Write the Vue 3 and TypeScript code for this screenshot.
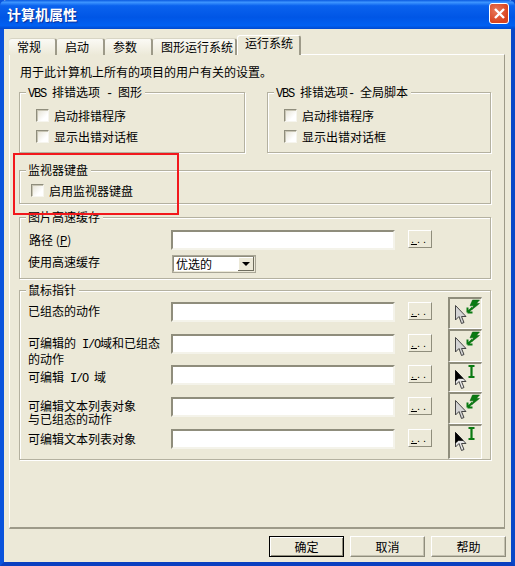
<script setup lang="ts">
interface PointerRow {
  id: number
  lines: string[]
}

const tabs = [
  { id: 1, text: '常规', width: 48 },
  { id: 2, text: '启动', width: 48 },
  { id: 3, text: '参数', width: 48 },
  { id: 4, text: '图形运行系统', width: 84 }
]

const pointerRows: PointerRow[] = [
  { id: 1, lines: ['已组态的动作'] },
  { id: 2, lines: ['可编辑的 I/O域和已组态', '的动作'] },
  { id: 3, lines: ['可编辑 I/O 域'] },
  { id: 4, lines: ['可编辑文本列表对象', '与已组态的动作'] },
  { id: 5, lines: ['可编辑文本列表对象'] }
]

const pointerIcons = [
  { id: 1, kind: 'bolt', height: 32 },
  { id: 2, kind: 'bolt', height: 33 },
  { id: 3, kind: 'beam', height: 31 },
  { id: 4, kind: 'bolt', height: 32 },
  { id: 5, kind: 'beam', height: 35 }
]

// latin runs are half width in the original font, so they get their own span
function parts(text: string) {
  return text.split(/([\x20-\x7e]+)/).filter(Boolean).map((t) => ({ t, latin: /^[\x20-\x7e]/.test(t) }))
}
</script>

<template>
  <div class="dialog">
    <div class="title-bar">
      <span class="title">计算机属性</span>
      <span class="close">
        <svg width="15" height="15" viewBox="0 0 15 15">
          <path d="M3 3 L12 12 M12 3 L3 12" stroke="#fff" stroke-width="2.4" fill="none" />
        </svg>
      </span>
    </div>

    <div class="body">
      <div class="tab-strip">
        <div v-for="t in tabs" :key="t.id" class="tab" :style="{ width: t.width + 'px' }">{{ t.text }}</div>
        <div class="tab active">运行系统</div>
      </div>

      <div class="panel">
        <p class="intro">用于此计算机上所有的项目的用户有关的设置。</p>

        <div class="vbs-row">
          <div class="group vbs-left">
            <span class="legend"><span v-for="p in parts('VBS 排错选项 - 图形')" :key="p.t" :class="{ mono: p.latin }">{{ p.t }}</span></span>
            <label class="check"><i class="box"></i>启动排错程序</label>
            <label class="check"><i class="box"></i>显示出错对话框</label>
          </div>
          <div class="group vbs-right">
            <span class="legend"><span v-for="p in parts('VBS 排错选项- 全局脚本')" :key="p.t" :class="{ mono: p.latin }">{{ p.t }}</span></span>
            <label class="check"><i class="box"></i>启动排错程序</label>
            <label class="check"><i class="box"></i>显示出错对话框</label>
          </div>
        </div>

        <div class="group monitor">
          <span class="legend">监视器键盘</span>
          <label class="check"><i class="box"></i>启用监视器键盘</label>
        </div>

        <div class="group cache">
          <span class="legend">图片高速缓存</span>
          <div class="row path-row">
            <span class="label">路径 (<u>P</u>)</span>
            <div class="input"></div>
            <button class="dots"><u>.</u>..</button>
          </div>
          <div class="row">
            <span class="label use-label">使用高速缓存</span>
            <div class="combo">
              <span class="combo-text">优选的</span>
              <span class="combo-btn"><i></i></span>
            </div>
          </div>
        </div>

        <div class="group pointer">
          <span class="legend">鼠标指针</span>
          <div class="pointer-list">
            <div v-for="r in pointerRows" :key="r.id" class="row pointer-row">
              <span class="label">
                <span v-for="l in r.lines" :key="l" class="line"><span v-for="p in parts(l)" :key="p.t" :class="{ mono: p.latin }">{{ p.t }}</span></span>
              </span>
              <div class="input"></div>
              <button class="dots"><u>.</u>..</button>
            </div>
          </div>
          <div class="icon-stack">
            <div v-for="ic in pointerIcons" :key="ic.id" class="icon-cell" :style="{ height: ic.height + 'px' }">
              <svg width="32" height="28" viewBox="0 0 32 28">
                <template v-if="ic.kind === 'bolt'">
                  <path d="M5.5 6.5 V21 L9 17.5 L11.5 24.5 L14 23.5 L11.5 17.5 H16 Z" fill="#d4d4d4" stroke="#444" stroke-width="1" />
                  <path d="M22.5 1 H29.5 L26.5 4.5 H29.5 L21.5 11 L23.5 6.8 H20 Z" fill="#0a7a12" stroke="#07600e" stroke-width="0.5" />
                  <path d="M17.5 13.5 L22.5 8.5 M17.5 13.5 V8.5 M17.5 13.5 H22.5" stroke="#0a7a12" stroke-width="2" fill="none" />
                </template>
                <template v-else>
                  <path d="M5.5 6.5 V21 L9 17.5 L11.5 24.5 L14 23.5 L11.5 17.5 H16 Z" fill="#e8e8e8" stroke="#444" stroke-width="1" />
                  <path d="M5.5 6.5 V17 L8.5 14.5 H13 Z" fill="#000" stroke="#000" stroke-width="0.6" />
                  <path d="M18.5 2 H24.5 M18.5 13 H24.5 M21.5 2 V13" stroke="#0a7a12" stroke-width="2.2" fill="none" />
                </template>
              </svg>
            </div>
          </div>
        </div>
      </div>

      <div class="actions">
        <button class="btn default">确定</button>
        <button class="btn">取消</button>
        <button class="btn">帮助</button>
      </div>
    </div>

    <div class="highlight"></div>
  </div>
</template>

<style>
html,
body {
  margin: 0;
  background: #ece9d8;
}
</style>

<style scoped>
.dialog {
  position: relative;
  width: 515px;
  height: 566px;
  box-sizing: border-box;
  display: flex;
  flex-direction: column;
  background: #ece9d8;
  border-left: 4px solid #0a53dc;
  border-right: 4px solid #0a47c8;
  border-bottom: 4px solid #0a3fc0;
  font-family: "Noto Sans CJK SC", "Liberation Sans", sans-serif;
  font-size: 12px;
  color: #000;
}

.title-bar {
  height: 29px;
  margin: 0 -4px;
  padding: 0 6px 2px 7px;
  box-sizing: border-box;
  display: flex;
  align-items: center;
  justify-content: space-between;
  background: linear-gradient(180deg, #0a5ae0 0%, #3d95ff 8%, #0a62ee 20%, #0056e6 60%, #0060f2 88%, #0049cf 100%);
  border-radius: 6px 6px 0 0;
}

.title {
  color: #fff;
  font-size: 14px;
  font-weight: 700;
  text-shadow: 1px 1px 1px #0a2f9a;
}

.close {
  width: 20px;
  height: 21px;
  box-sizing: border-box;
  display: flex;
  align-items: center;
  justify-content: center;
  background: radial-gradient(circle at 35% 35%, #e8795a, #d8431f 70%);
  border: 1px solid #fff;
  border-radius: 3px;
}

.body {
  flex: 1;
  padding: 6px 6px 0 5px;
  display: flex;
  flex-direction: column;
}

.tab-strip {
  height: 20px;
  display: flex;
  align-items: flex-end;
  position: relative;
  z-index: 1;
  margin-bottom: -1px;
}

.tab {
  height: 17px;
  box-sizing: border-box;
  padding: 0 0 0 8px;
  line-height: 15px;
  background: linear-gradient(180deg, #fbfaf5, #ece9d8);
  border-top: 1px solid #d8d5c4;
  border-right: 2px solid #9d9a89;
  border-radius: 3px 3px 0 0;
}

.tab.active {
  width: 64px;
  height: 20px;
  line-height: 13px;
  background: #ece9d8;
  border-top: 1px solid #fff;
  border-left: 1px solid #fff;
  padding-left: 7px;
}

.panel {
  height: 475px;
  box-sizing: border-box;
  padding: 0 13px 0 9px;
  border: 1px solid #fff;
  border-right: 1px solid #9d9a89;
  border-bottom: 2px solid #9d9a89;
}

.intro {
  margin: 0;
  padding: 9px 0 0 1px;
  height: 29px;
  box-sizing: border-box;
  line-height: 16px;
}

.mono {
  font-family: "Liberation Mono", monospace;
  font-size: 12px;
  letter-spacing: -1.2px;
  white-space: pre;
}

.group {
  position: relative;
  box-sizing: border-box;
  border: 1px solid #b4b1a0;
  box-shadow: 1px 1px 0 #fff, inset 1px 1px 0 #fff;
}

.legend {
  position: absolute;
  top: -9px;
  left: 6px;
  padding: 0 3px 0 2px;
  background: #ece9d8;
  line-height: 16px;
  white-space: nowrap;
}

.vbs-row {
  display: flex;
  gap: 22px;
  margin-top: 8px;
}

.vbs-left,
.vbs-right {
  height: 61px;
  padding: 12px 0 0 16px;
}

.vbs-left {
  width: 227px;
}

.vbs-right {
  width: 225px;
}

.check {
  height: 21px;
  display: flex;
  align-items: center;
  gap: 5px;
}

.box {
  width: 13px;
  height: 13px;
  box-sizing: border-box;
  background: linear-gradient(135deg, #e4e1d2, #fff 70%);
  border: 1px solid;
  border-color: #8f8d7c #f6f5ee #f6f5ee #8f8d7c;
  box-shadow: inset 1px 1px 0 #c8c5b4;
}

.monitor {
  height: 34px;
  margin-top: 17px;
  padding: 9px 0 0 11px;
}

.cache {
  height: 62px;
  margin-top: 13px;
  padding: 12px 8px 0 8px;
}

.row {
  display: flex;
  align-items: flex-start;
}

.path-row {
  margin-bottom: 5px;
}

.label {
  width: 143px;
  flex-shrink: 0;
  line-height: 13px;
  padding-top: 2px;
  white-space: nowrap;
}

.path-row .label {
  padding-left: 1px;
  padding-top: 3px;
  width: 142px;
}

.use-label {
  padding-top: 0;
}

.pointer-row:nth-child(3) .label {
  padding-top: 5px;
}

.pointer-row:nth-child(5) .label {
  padding-top: 3px;
}

.line {
  display: block;
}

.input {
  width: 224px;
  height: 20px;
  box-sizing: border-box;
  background: #fff;
  border: 2px solid;
  border-color: #8f8d7c #f4f3ea #f4f3ea #8f8d7c;
}

.dots {
  width: 24px;
  height: 18px;
  margin-left: 13px;
  padding: 0;
  box-sizing: border-box;
  background: #ece9d8;
  border: 1px solid;
  border-color: #fff #8f8d7c #8f8d7c #fff;
  font-family: "Liberation Sans", sans-serif;
  font-size: 11px;
  letter-spacing: 3px;
  line-height: 14px;
  color: #000;
}

.combo {
  width: 84px;
  height: 18px;
  margin-left: 1px;
  box-sizing: border-box;
  display: flex;
  justify-content: space-between;
  background: #fff;
  border: 2px solid;
  border-color: #8f8d7c #ece9d8 #ece9d8 #8f8d7c;
  outline: 1px solid #a9a696;
  outline-offset: -1px;
}

.combo-text {
  padding-left: 2px;
  line-height: 14px;
}

.combo-btn {
  width: 16px;
  display: flex;
  align-items: center;
  justify-content: center;
  background: #ece9d8;
  box-shadow: inset -1px -1px 0 #6f6d5e, inset 1px 1px 0 #fff;
}

.combo-btn i {
  width: 0;
  height: 0;
  border-left: 4px solid transparent;
  border-right: 4px solid transparent;
  border-top: 4px solid #000;
}

.pointer {
  height: 170px;
  margin-top: 11px;
  padding: 6px 8px 0 8px;
  display: flex;
  justify-content: space-between;
}

.pointer-list {
  padding-top: 5px;
}

.pointer-row {
  height: 32px;
}

.pointer-row:nth-child(2) {
  height: 31px;
}

.icon-stack {
  width: 34px;
  display: flex;
  flex-direction: column;
}

.icon-cell {
  box-sizing: border-box;
  background: #ece9d8;
  border: 1px solid;
  border-color: #8f8d7c #fff #fff #8f8d7c;
  border-width: 2px 1px 1px 2px;
  overflow: hidden;
}

.icon-cell svg {
  display: block;
}

.actions {
  display: flex;
  justify-content: flex-end;
  gap: 6px;
  margin: 7px -1px 0 0;
}

.btn {
  width: 75px;
  height: 21px;
  padding: 0;
  box-sizing: border-box;
  background: #ece9d8;
  border: 1px solid;
  border-color: #fff #8f8d7c #8f8d7c #fff;
  box-shadow: inset -1px -1px 0 #c4c1b0;
  font-family: "Noto Sans CJK SC", "Liberation Sans", sans-serif;
  font-size: 12px;
  color: #000;
}

.btn.default {
  border-color: #000;
  box-shadow: inset 1px 1px 0 #fff, inset -1px -1px 0 #8f8d7c;
}

.highlight {
  position: absolute;
  left: 9px;
  top: 153px;
  width: 166px;
  height: 62px;
  box-sizing: border-box;
  border: 2px solid #f2181c;
  pointer-events: none;
}
</style>
